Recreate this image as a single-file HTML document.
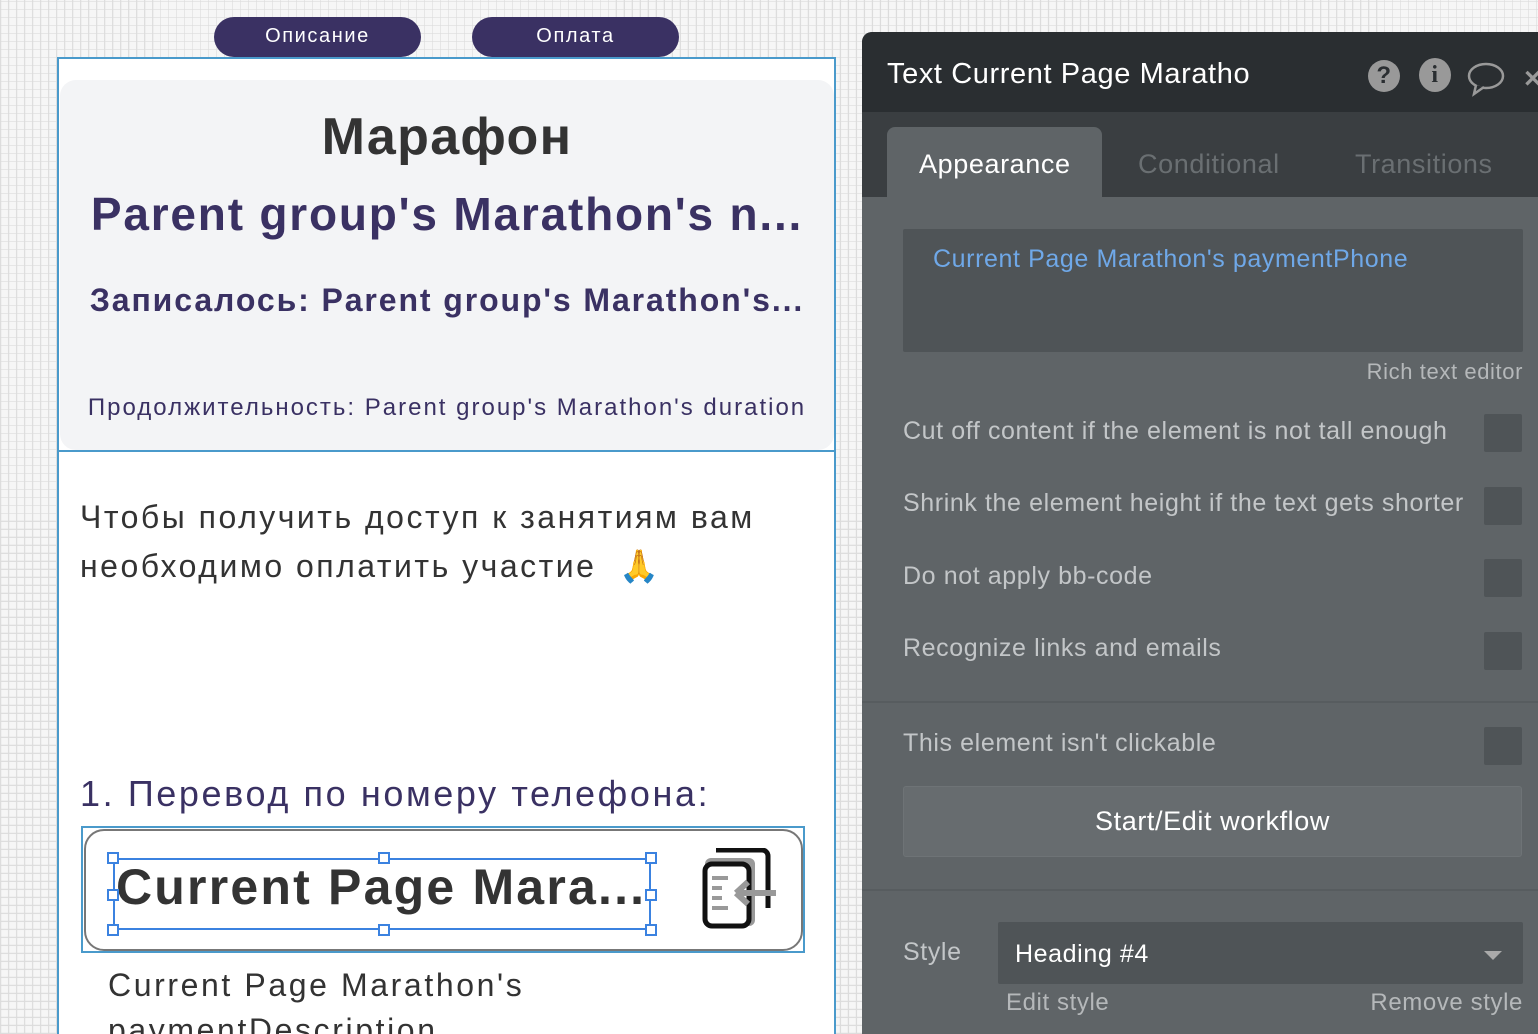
<!DOCTYPE html>
<html style="width:1538px;height:1034px;overflow:hidden"><head><meta charset="utf-8"><style>
*{margin:0;padding:0;box-sizing:border-box}
body{width:1538px;height:1034px;overflow:hidden;position:relative;font-family:"Liberation Sans","DejaVu Sans",sans-serif;
background-color:#f6f6f6;
background-image:repeating-linear-gradient(0deg,#dcdcdc 0 1px,transparent 1px 8px),repeating-linear-gradient(90deg,#dcdcdc 0 1px,transparent 1px 8px);}
.a{position:absolute}
.pill{position:absolute;top:17px;height:40px;width:207px;background:#3a3163;border-radius:20px;color:#fff;font-size:20px;text-align:center;line-height:38px;letter-spacing:1.6px}
.card{left:57px;top:57px;width:779px;height:990px;background:#fff;border:2px solid #4a9acb}
.grey{left:60px;top:80px;width:774px;height:370px;background:#f3f4f6;border-radius:16px}
.p{position:absolute;left:862px;top:32px;width:676px;height:1002px;background:#5f6467;border-radius:10px 0 0 0;overflow:hidden;letter-spacing:0.6px}
.lbl{position:absolute;left:41px;color:#c3c6c8;font-size:25px}
.cb{position:absolute;left:622px;width:38px;height:38px;background:#4f5457;border-radius:2px}
</style></head><body>
<div class="pill" style="left:214px">Описание</div>
<div class="pill" style="left:472px">Оплата</div>
<div class="a card"></div>
<div class="a grey"></div>
<div class="a" style="left:59px;top:450px;width:776px;height:2px;background:#4a9acb"></div>
<div class="a" style="left:60px;top:107px;width:774px;text-align:center;font-size:52px;font-weight:bold;color:#333;letter-spacing:1.3px">Марафон</div>
<div class="a" style="left:60px;top:187px;width:774px;text-align:center;font-size:46px;font-weight:bold;color:#3a3163;letter-spacing:1.8px">Parent group's Marathon's n...</div>
<div class="a" style="left:60px;top:282px;width:774px;text-align:center;font-size:32px;font-weight:bold;color:#3a3163;letter-spacing:1.9px">Записалось: Parent group's Marathon's...</div>
<div class="a" style="left:60px;top:394px;width:774px;text-align:center;font-size:24px;color:#3a3163;letter-spacing:2px">Продолжительность: Parent group's Marathon's duration</div>
<div class="a" style="left:80px;top:493px;font-size:32px;color:#333;line-height:49px;letter-spacing:2.5px">Чтобы получить доступ к занятиям вам<br>необходимо оплатить участие &nbsp;🙏</div>
<div class="a" style="left:80px;top:773px;font-size:36px;color:#3a3163;letter-spacing:2.6px">1. Перевод по номеру телефона:</div>
<div class="a" style="left:81px;top:826px;width:724px;height:127px;border:2px solid #4a9acb"></div>
<div class="a" style="left:84px;top:829px;width:719px;height:122px;border:2px solid #777;border-radius:20px;background:#fff"></div>
<div class="a" style="left:113px;top:858px;width:538px;height:72px;border:2px solid #3b82e0"></div>
<div class="a" style="left:116px;top:858px;font-size:50px;font-weight:bold;color:#333;letter-spacing:2.2px;white-space:nowrap">Current Page Mara...</div>
<div class="a" style="left:107px;top:852px;width:12px;height:12px;border:2px solid #3b82e0;background:#fff"></div>
<div class="a" style="left:378px;top:852px;width:12px;height:12px;border:2px solid #3b82e0;background:#fff"></div>
<div class="a" style="left:645px;top:852px;width:12px;height:12px;border:2px solid #3b82e0;background:#fff"></div>
<div class="a" style="left:107px;top:889px;width:12px;height:12px;border:2px solid #3b82e0;background:#fff"></div>
<div class="a" style="left:645px;top:889px;width:12px;height:12px;border:2px solid #3b82e0;background:#fff"></div>
<div class="a" style="left:107px;top:924px;width:12px;height:12px;border:2px solid #3b82e0;background:#fff"></div>
<div class="a" style="left:378px;top:924px;width:12px;height:12px;border:2px solid #3b82e0;background:#fff"></div>
<div class="a" style="left:645px;top:924px;width:12px;height:12px;border:2px solid #3b82e0;background:#fff"></div>
<svg class="a" style="left:700px;top:848px" width="80" height="84" viewBox="0 0 80 84">
<rect x="5" y="10" width="50" height="68" rx="6" fill="#999"/>
<path d="M16 2 H62 a6 6 0 0 1 6 6 V60" fill="none" stroke="#111" stroke-width="5"/>
<rect x="5" y="16" width="44" height="62" rx="7" fill="#fff" stroke="#111" stroke-width="5"/>
<path d="M12 30h16M12 40h10M12 50h10M12 60h16" stroke="#999" stroke-width="4"/>
<path d="M36 45h40M36 45l12-11M36 45l12 11" stroke="#999" stroke-width="6" fill="none"/>
</svg>
<div class="a" style="left:108px;top:963px;font-size:32px;color:#333;line-height:45px;letter-spacing:2.6px">Current Page Marathon's<br>paymentDescription</div>

<div class="p">
<div class="a" style="left:0;top:0;width:690px;height:80px;background:#2a2e31"></div>
<div class="a" style="left:25px;top:26px;font-size:29px;color:#fff">Text Current Page Maratho</div>
<div class="a" style="left:506px;top:28px;width:32px;height:32px;border-radius:50%;background:#999;color:#2a2e31;font-weight:bold;font-size:24px;text-align:center;line-height:32px">?</div>
<div class="a" style="left:557px;top:26px;width:32px;height:34px;border-radius:50%;background:#999;color:#2a2e31;font-weight:bold;font-size:24px;text-align:center;line-height:34px;font-family:'Liberation Serif',serif">i</div>
<svg class="a" style="left:604px;top:28px" width="40" height="38"><ellipse cx="20" cy="16" rx="17" ry="12" fill="none" stroke="#999" stroke-width="2.5"/><path d="M10 25 L8 34 L18 27" fill="#2a2e31" stroke="#999" stroke-width="2.5"/></svg>
<div class="a" style="left:662px;top:30px;color:#999;font-size:30px;font-weight:bold">×</div>
<div class="a" style="left:0;top:80px;width:690px;height:85px;background:#3a3e41"></div>
<div class="a" style="left:25px;top:95px;width:215px;height:72px;background:#5f6467;border-radius:8px 8px 0 0"></div>
<div class="a" style="left:57px;top:117px;font-size:27px;color:#fff">Appearance</div>
<div class="a" style="left:276px;top:117px;font-size:27px;color:#6a6f72">Conditional</div>
<div class="a" style="left:493px;top:117px;font-size:27px;color:#6a6f72">Transitions</div>
<div class="a" style="left:41px;top:197px;width:620px;height:123px;background:#4f5457;border-radius:2px"></div>
<div class="a" style="left:71px;top:213px;font-size:25px;color:#6fa8e8">Current Page Marathon's paymentPhone</div>
<div class="a" style="right:15px;top:327px;font-size:22px;color:#b5b8ba">Rich text editor</div>
<div class="lbl" style="top:385px">Cut off content if the element is not tall enough</div><div class="cb" style="top:382px"></div>
<div class="lbl" style="top:457px">Shrink the element height if the text gets shorter</div><div class="cb" style="top:455px"></div>
<div class="lbl" style="top:530px">Do not apply bb-code</div><div class="cb" style="top:527px"></div>
<div class="lbl" style="top:602px">Recognize links and emails</div><div class="cb" style="top:600px"></div>
<div class="a" style="left:0;top:669px;width:690px;height:2px;background:#575c5f"></div>
<div class="lbl" style="top:697px">This element isn't clickable</div><div class="cb" style="top:695px"></div>
<div class="a" style="left:41px;top:754px;width:619px;height:71px;background:#676c6f;border:1px solid #6e7376;border-radius:3px;color:#fff;font-size:27px;text-align:center;line-height:69px">Start/Edit workflow</div>
<div class="a" style="left:0;top:857px;width:690px;height:2px;background:#575c5f"></div>
<div class="lbl" style="top:906px">Style</div>
<div class="a" style="left:136px;top:890px;width:525px;height:62px;background:#4f5457;border-radius:2px"></div>
<div class="a" style="left:153px;top:908px;font-size:25px;color:#fff">Heading #4</div>
<div class="a" style="left:622px;top:919px;width:0;height:0;border-left:9px solid transparent;border-right:9px solid transparent;border-top:9px solid #aaa"></div>
<div class="a" style="left:144px;top:957px;font-size:24px;color:#b5b8ba">Edit style</div>
<div class="a" style="right:15px;top:957px;font-size:24px;color:#b5b8ba">Remove style</div>
</div>
</body></html>
